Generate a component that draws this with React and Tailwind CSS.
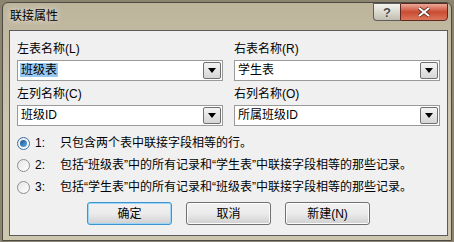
import { useState } from 'react'

const font = { fontFamily: '"Liberation Sans", "Noto Sans CJK SC", sans-serif' }

function Combo({ value, selected }) {
  return (
    <div className="flex h-[21px] items-center border border-[#9a9a9a] bg-white pl-[2px] pr-[1px]">
      <div className="flex-1 text-[12px] leading-[15px] text-black">
        <span className={selected ? 'bg-[#99c9f3] px-[1px]' : 'px-[1px]'}>{value}</span>
      </div>
      <div className="flex h-[17px] w-[18px] items-center justify-center rounded-[2px] border border-[#707070] bg-gradient-to-b from-[#f4f4f4] to-[#d6d6d6]">
        <svg width="8" height="5" viewBox="0 0 8 5">
          <path d="M0 0h8L4 5z" fill="#000" />
        </svg>
      </div>
    </div>
  )
}

function Radio({ checked, num, text, onClick }) {
  return (
    <div className="flex h-[22px] items-center text-[12px] text-black" onClick={onClick}>
      <div
        className={`flex h-[13px] w-[13px] items-center justify-center rounded-full border ${
          checked ? 'border-[#3b6fa3]' : 'border-[#8e8f8f]'
        } bg-gradient-to-br from-[#e6e6e6] to-[#ffffff]`}
      >
        {checked && (
          <div className="h-[7px] w-[7px] rounded-full bg-gradient-to-br from-[#1a4f8a] to-[#5fb0ec]" />
        )}
      </div>
      <span className="ml-[5px] w-[25px]">{num}:</span>
      <span>{text}</span>
    </div>
  )
}

function Btn({ label, primary }) {
  return (
    <div
      className={`flex h-[23px] w-[85px] items-center justify-center rounded-[3px] border text-[12px] text-black ${
        primary
          ? 'border-[#3c95d0] shadow-[inset_0_0_0_1px_#9fd6f5]'
          : 'border-[#707070] shadow-[inset_0_0_0_1px_#fcfcfc]'
      } bg-gradient-to-b from-[#f2f2f2] via-[#ebebeb] to-[#d0d0d0]`}
    >
      {label}
    </div>
  )
}

export default function App() {
  const [mode, setMode] = useState(1)

  const options = [
    { n: 1, t: '只包含两个表中联接字段相等的行。' },
    { n: 2, t: '包括“班级表”中的所有记录和“学生表”中联接字段相等的那些记录。' },
    { n: 3, t: '包括“学生表”中的所有记录和“班级表”中联接字段相等的那些记录。' },
  ]

  return (
    <div className="h-[242px] w-[454px] overflow-hidden bg-[#8d8470]" style={font}>
      <div className="ml-[2px] mt-[2px] h-[239px] w-[450px] rounded-t-[6px] border border-[#4b4a45] bg-gradient-to-b from-[#bdb49c] via-[#cdc6ae] to-[#cdc6ae]">
        <div className="flex h-[27px] items-start justify-between">
          <div className="pl-[7px] pt-[5px] text-[12px] leading-[16px] text-black [text-shadow:0_0_6px_#ffffff]">
            联接属性
          </div>
          <div className="mr-[3px] flex">
            <div className="flex h-[18px] w-[27px] items-center justify-center rounded-bl-[4px] border border-r-0 border-[#5d5d5d] bg-gradient-to-b from-[#f4f3ee] via-[#dcd9d0] to-[#c2beb1]">
              <span className="text-[13px] font-bold leading-none text-[#4a4a4a] [text-shadow:0_0_2px_#fff]">?</span>
            </div>
            <div className="flex h-[18px] w-[48px] items-center justify-center rounded-br-[4px] border border-[#5a2a22] bg-gradient-to-b from-[#eaa998] via-[#c94a33] to-[#dc7658]">
              <svg width="12" height="10" viewBox="0 0 12 10">
                <path d="M1 1L11 9M11 1L1 9" stroke="#4a1a12" strokeWidth="3.4" />
                <path d="M1 1L11 9M11 1L1 9" stroke="#fff" strokeWidth="2.2" />
              </svg>
            </div>
          </div>
        </div>
        <div className="ml-[6px] h-[206px] w-[439px] border border-[#5b5b5b] bg-[#f0f0f0] px-[7px] pt-[10px]">
          <div className="grid grid-cols-2 gap-x-[11px]">
            <div>
              <div className="h-[16px] text-[12px] leading-[16px] text-black">左表名称(L)</div>
              <div className="mt-[3px]">
                <Combo value="班级表" selected />
              </div>
              <div className="mt-[5px] h-[16px] text-[12px] leading-[16px] text-black">左列名称(C)</div>
              <div className="mt-[3px]">
                <Combo value="班级ID" />
              </div>
            </div>
            <div>
              <div className="h-[16px] text-[12px] leading-[16px] text-black">右表名称(R)</div>
              <div className="mt-[3px]">
                <Combo value="学生表" />
              </div>
              <div className="mt-[5px] h-[16px] text-[12px] leading-[16px] text-black">右列名称(O)</div>
              <div className="mt-[3px]">
                <Combo value="所属班级ID" />
              </div>
            </div>
          </div>
          <div className="mt-[6px]">
            {options.map((o) => (
              <Radio key={o.n} num={o.n} text={o.t} checked={mode === o.n} onClick={() => setMode(o.n)} />
            ))}
          </div>
          <div className="mt-[4px] flex gap-[14px] pl-[70px]">
            <Btn label="确定" primary />
            <Btn label="取消" />
            <Btn label="新建(N)" />
          </div>
        </div>
      </div>
    </div>
  )
}
